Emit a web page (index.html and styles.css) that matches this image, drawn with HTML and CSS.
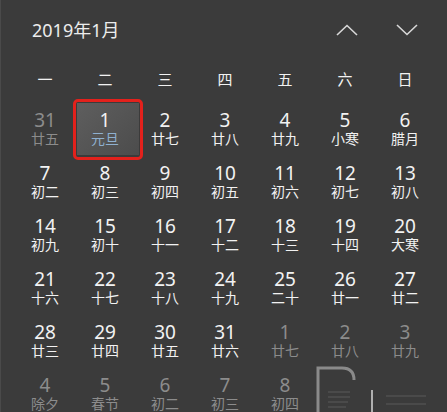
FILE: index.html
```html
<!DOCTYPE html>
<html lang="zh-CN">
<head>
    <meta charset="UTF-8">
    <meta name="viewport" content="width=device-width, initial-scale=1.0">
    <title>日历</title>
    <link rel="stylesheet" href="styles.css">
</head>
<body>
    <div class="calendar">
        <header class="header">
            <span class="title">2019年1月</span>
            <div class="nav">
                <button class="nav-btn" aria-label="上一月">
                    <svg width="22" height="12" viewBox="0 0 22 12"><polyline points="1,11 11,1.5 21,11" /></svg>
                </button>
                <button class="nav-btn" aria-label="下一月">
                    <svg width="22" height="12" viewBox="0 0 22 12"><polyline points="1,1 11,10.5 21,1" /></svg>
                </button>
            </div>
        </header>

        <div class="weekdays">
            <span>一</span><span>二</span><span>三</span><span>四</span><span>五</span><span>六</span><span>日</span>
        </div>

        <div class="days">
            <div class="day other"><span class="num">31</span><span class="lunar">廿五</span></div>
            <div class="day selected"><span class="num">1</span><span class="lunar">元旦</span></div>
            <div class="day"><span class="num">2</span><span class="lunar">廿七</span></div>
            <div class="day"><span class="num">3</span><span class="lunar">廿八</span></div>
            <div class="day"><span class="num">4</span><span class="lunar">廿九</span></div>
            <div class="day"><span class="num">5</span><span class="lunar">小寒</span></div>
            <div class="day"><span class="num">6</span><span class="lunar">腊月</span></div>

            <div class="day"><span class="num">7</span><span class="lunar">初二</span></div>
            <div class="day"><span class="num">8</span><span class="lunar">初三</span></div>
            <div class="day"><span class="num">9</span><span class="lunar">初四</span></div>
            <div class="day"><span class="num">10</span><span class="lunar">初五</span></div>
            <div class="day"><span class="num">11</span><span class="lunar">初六</span></div>
            <div class="day"><span class="num">12</span><span class="lunar">初七</span></div>
            <div class="day"><span class="num">13</span><span class="lunar">初八</span></div>

            <div class="day"><span class="num">14</span><span class="lunar">初九</span></div>
            <div class="day"><span class="num">15</span><span class="lunar">初十</span></div>
            <div class="day"><span class="num">16</span><span class="lunar">十一</span></div>
            <div class="day"><span class="num">17</span><span class="lunar">十二</span></div>
            <div class="day"><span class="num">18</span><span class="lunar">十三</span></div>
            <div class="day"><span class="num">19</span><span class="lunar">十四</span></div>
            <div class="day"><span class="num">20</span><span class="lunar">大寒</span></div>

            <div class="day"><span class="num">21</span><span class="lunar">十六</span></div>
            <div class="day"><span class="num">22</span><span class="lunar">十七</span></div>
            <div class="day"><span class="num">23</span><span class="lunar">十八</span></div>
            <div class="day"><span class="num">24</span><span class="lunar">十九</span></div>
            <div class="day"><span class="num">25</span><span class="lunar">二十</span></div>
            <div class="day"><span class="num">26</span><span class="lunar">廿一</span></div>
            <div class="day"><span class="num">27</span><span class="lunar">廿二</span></div>

            <div class="day"><span class="num">28</span><span class="lunar">廿三</span></div>
            <div class="day"><span class="num">29</span><span class="lunar">廿四</span></div>
            <div class="day"><span class="num">30</span><span class="lunar">廿五</span></div>
            <div class="day"><span class="num">31</span><span class="lunar">廿六</span></div>
            <div class="day other"><span class="num">1</span><span class="lunar">廿七</span></div>
            <div class="day other"><span class="num">2</span><span class="lunar">廿八</span></div>
            <div class="day other"><span class="num">3</span><span class="lunar">廿九</span></div>

            <div class="day other"><span class="num">4</span><span class="lunar">除夕</span></div>
            <div class="day other"><span class="num">5</span><span class="lunar">春节</span></div>
            <div class="day other"><span class="num">6</span><span class="lunar">初二</span></div>
            <div class="day other"><span class="num">7</span><span class="lunar">初三</span></div>
            <div class="day other"><span class="num">8</span><span class="lunar">初四</span></div>
            <div class="day other"></div>
            <div class="day other"></div>
        </div>
    </div>

    <!-- faint watermark in the corner -->
    <svg class="watermark" width="130" height="48" viewBox="0 0 130 48">
        <path class="wm-frame" d="M2 48 V2 H26 Q38 2 38 14" />
        <path class="wm-lines" d="M12 26 H34 M12 31 H34 M12 36 H32 M12 41 H30" />
        <line class="wm-bar" x1="56" y1="24" x2="56" y2="48" />
        <path class="wm-lines" d="M70 30 H110 M70 38 H110" />
    </svg>
</body>
</html>
```

FILE: styles.css
```css
body {
    margin: 0;
    padding: 0;
    background: #3b3b3b;
    color: #f2f2f2;
    font-family: "Noto Sans", "Noto Sans CJK SC", sans-serif;
    height: 412px;
    overflow: hidden;
    border-left: 1px solid #4a4a4a;
    box-sizing: border-box;
}

.calendar {
    padding: 0 12px 0 14px;
}

.header {
    display: flex;
    justify-content: space-between;
    align-items: center;
    padding: 18px 0 0 17px;
    height: 24px;
}

.title {
    font-size: 18px;
    line-height: 24px;
    color: #ececec;
}

.nav {
    display: flex;
    gap: 38px;
    padding-right: 17px;
}

.nav-btn {
    background: none;
    border: none;
    padding: 0;
    width: 22px;
    height: 12px;
    cursor: pointer;
}

.nav-btn svg {
    display: block;
}

.nav-btn polyline {
    fill: none;
    stroke: #d8d8d8;
    stroke-width: 1.6;
}

.weekdays {
    display: grid;
    grid-template-columns: repeat(7, 60px);
    margin-top: 27px;
    font-size: 15px;
    line-height: 20px;
    text-align: center;
}

.days {
    position: relative;
    z-index: 0;
    display: grid;
    grid-template-columns: repeat(7, 60px);
    grid-auto-rows: 53px;
    margin-top: 13px;
}

.day {
    position: relative;
    display: flex;
    flex-direction: column;
    align-items: center;
    padding-top: 8px;
    box-sizing: border-box;
}

.num {
    font-size: 19px;
    line-height: 20px;
}

.lunar {
    font-size: 14px;
    line-height: 16px;
    margin-top: 1px;
}

.day.other {
    color: #8c8c8c;
}

.day.selected::before {
    content: "";
    position: absolute;
    left: 2px;
    right: -4px;
    top: 1px;
    bottom: 0;
    background: linear-gradient(135deg, #5e5e5e, #4c4c4c);
    z-index: -1;
}

.day.selected::after {
    content: "";
    position: absolute;
    left: -2px;
    right: -8px;
    top: -3px;
    bottom: -5px;
    border: 3px solid #e3211c;
    border-radius: 5px;
}

.day.selected .lunar {
    color: #8fb0cf;
}

.watermark {
    position: absolute;
    left: 316px;
    top: 366px;
}

.wm-frame {
    fill: none;
    stroke: #8a8a8a;
    stroke-width: 3;
}

.wm-lines {
    fill: none;
    stroke: #4a4a4a;
    stroke-width: 2;
}

.wm-bar {
    stroke: #b0b0b0;
    stroke-width: 2;
}
```
